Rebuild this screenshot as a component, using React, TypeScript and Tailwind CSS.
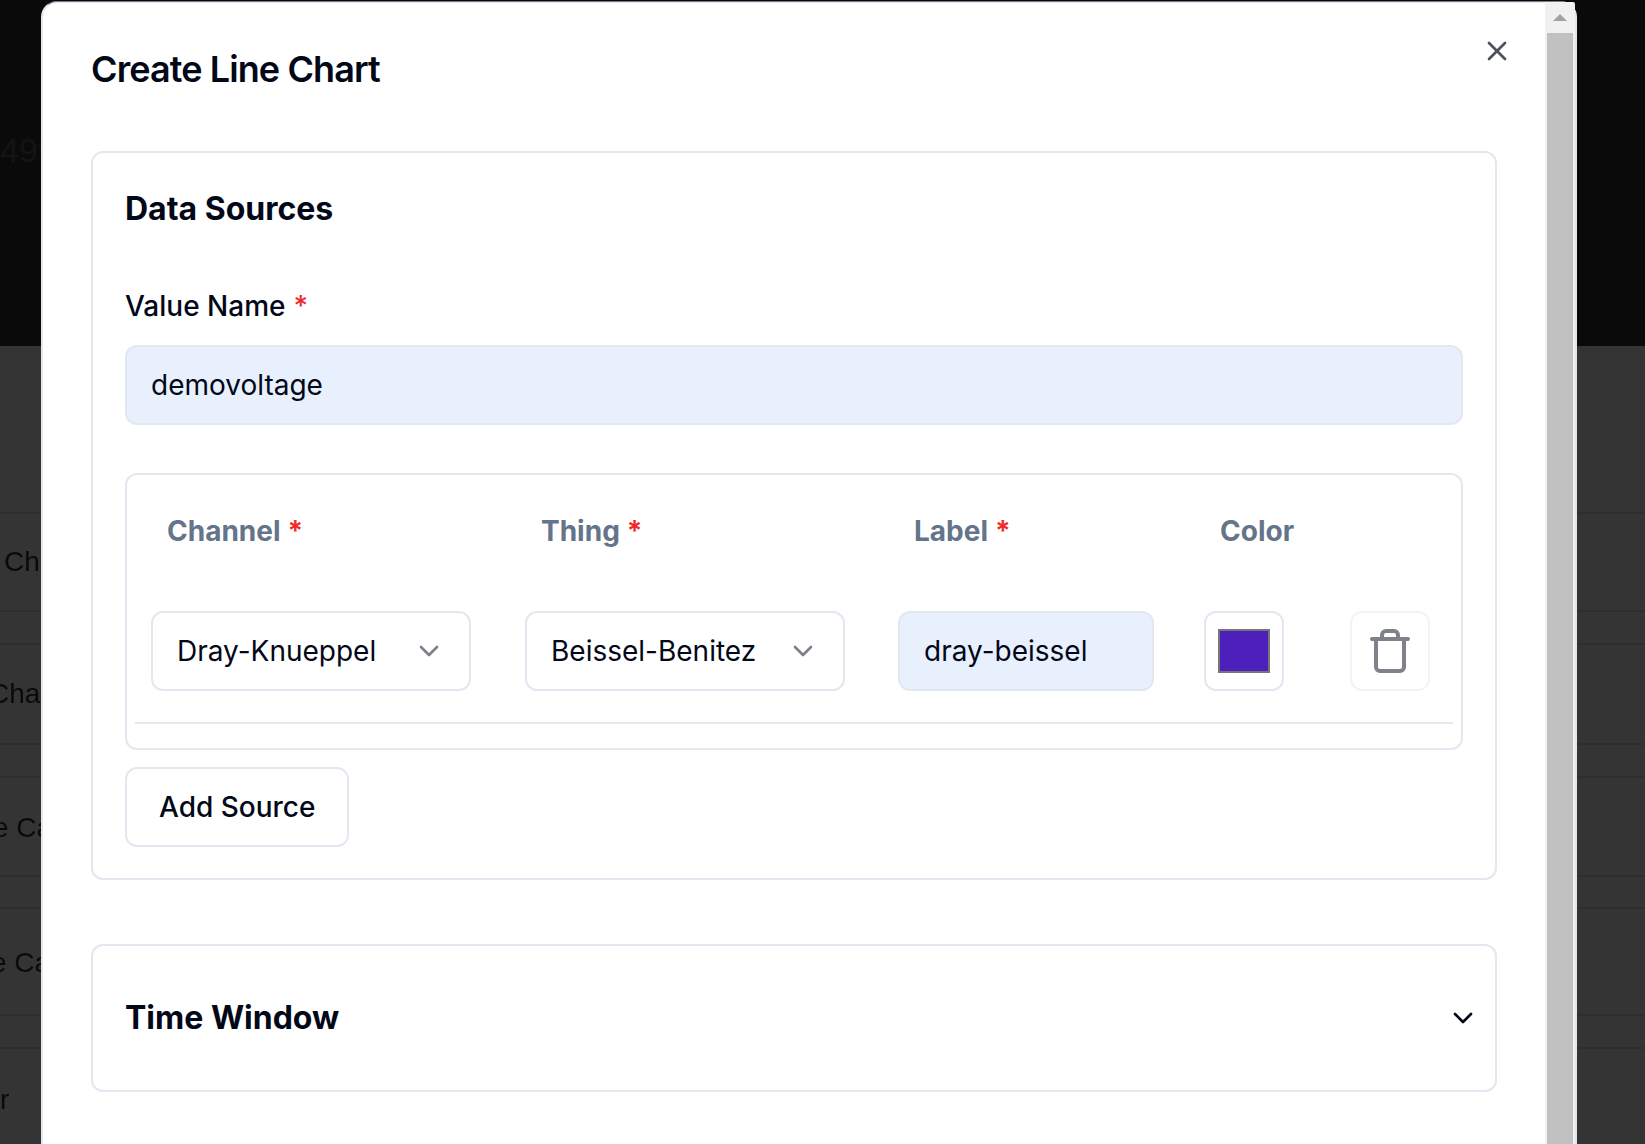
import { ChevronDown, Trash, X } from "lucide-react";

const font = { fontFamily: "Inter, sans-serif" };

const BackgroundRow = ({ text, h, indent }: { text: string; h: string; indent: string }) => (
  <div className={`${h} flex items-center border-t-2 border-[#2e2e2e] font-['Liberation_Sans',sans-serif] text-[28px] text-[#0a0a0a] blur-[0.5px]`}>
    <span className={`${indent} whitespace-nowrap`}>{text}</span>
  </div>
);

const Req = () => <span className="ml-2 text-[#ef2b2b]">*</span>;
const HeadReq = () => <span className="ml-[7px] text-[#ef2b2b]">*</span>;

const Select = ({ value }: { value: string }) => (
  <div className="flex h-20 items-center justify-between rounded-xl border-2 border-[#e2e8f0] px-6 text-[28px]">
    <span>{value}</span>
    <ChevronDown className="h-8 w-8 opacity-50" />
  </div>
);

export default function App() {
  return (
    <div className="relative h-[1144px] w-full overflow-hidden bg-[#343434]" style={font}>
      {/* page behind the overlay */}
      <div className="flex h-[346px] items-start bg-[#0a0a0a] pt-[125px] font-['Liberation_Sans',sans-serif] text-[34px] text-[#141414]">
        <span>499</span>
      </div>
      <div className="h-[166px]" />
      <BackgroundRow text="Ch" h="h-[98px]" indent="ml-1" />
      <div className="h-[33px] border-t-2 border-[#2e2e2e]" />
      <BackgroundRow text="Cha" h="h-[100px]" indent="-ml-[11px]" />
      <div className="h-[33px] border-t-2 border-[#2e2e2e]" />
      <BackgroundRow text="e Ca" h="h-[99px] pt-[3px]" indent="-ml-[7px]" />
      <div className="h-8 border-t-2 border-[#2e2e2e]" />
      <BackgroundRow text="e Ca" h="h-[107px] pt-[3px]" indent="-ml-[9px]" />
      <div className="h-[33px] border-t-2 border-[#2e2e2e]" />
      <BackgroundRow text="r" h="h-[100px] pt-[3px]" indent="ml-0" />

      {/* modal */}
      <div className="absolute left-[41px] top-px flex h-[1200px] w-[1536px] rounded-t-2xl border-2 border-[#e2e8f0] border-t-[#7b7f8a] border-t-1 bg-white text-[#020817] shadow-[inset_0_1px_0_#e2e8f0]">
        <div className="relative w-[1502px] shrink-0 px-12 pt-[49px]">
          <h2 className="text-[36px] font-semibold leading-9 tracking-tight">Create Line Chart</h2>
          <X className="absolute right-[32px] top-[33px] h-8 w-8 opacity-70" />

          <section className="mt-16 h-[729px] rounded-xl border-2 border-[#e2e8f0] px-8 pt-8">
            <h3 className="text-[32px] font-bold leading-[48px]">Data Sources</h3>
            <label className="mt-[59px] block text-[28px] font-medium leading-7">
              Value Name<Req />
            </label>
            <div className="mt-[25px] flex h-20 items-center rounded-xl border-2 border-[#e2e8f0] bg-[#e8f0fe] px-6 text-[28px]">
              demovoltage
            </div>

            <div className="mt-[48px] h-[277px] rounded-xl border-2 border-[#e2e8f0] px-2">
              <div className="grid h-[136px] grid-cols-[374px_373px_306px_146px_119px] content-start pt-[34px] text-[28px] font-bold leading-[44px] text-[#64748b]">
                <div className="pl-[32px]">Channel<HeadReq /></div>
                <div className="pl-[32px]">Thing<HeadReq /></div>
                <div className="pl-[32px]">Label<HeadReq /></div>
                <div className="pl-[32px]">Color</div>
                <div />
              </div>
              <div className="grid h-[113px] grid-cols-[374px_373px_306px_146px_119px] content-start border-b-2 border-[#e2e8f0]">
                <div className="pl-[16px] pr-[38px]"><Select value="Dray-Knueppel" /></div>
                <div className="pl-[16px] pr-[37px]"><Select value="Beissel-Benitez" /></div>
                <div className="pl-[16px] pr-[34px]">
                  <div className="flex h-20 items-center rounded-xl border-2 border-[#e2e8f0] bg-[#e8f0fe] px-6 text-[28px]">dray-beissel</div>
                </div>
                <div className="pl-[16px]">
                  <div className="flex h-20 w-20 items-center justify-center rounded-xl border-2 border-[#e2e8f0]">
                    <div className="h-[44px] w-[52px] border-2 border-[#767676] bg-[#4d20bc]" />
                  </div>
                </div>
                <div className="pl-[16px]">
                  <div className="flex h-20 w-20 items-center justify-center rounded-xl border-2 border-[#e2e8f0] opacity-50">
                    <Trash className="h-12 w-12" />
                  </div>
                </div>
              </div>
            </div>

            <div className="mt-[17px] inline-flex h-20 items-center rounded-xl border-2 border-[#e2e8f0] px-8 text-[28px] font-medium">
              Add Source
            </div>
          </section>

          <section className="mt-[64px] flex h-[148px] items-center justify-between rounded-xl border-2 border-[#e2e8f0] pl-8 pr-4">
            <h3 className="text-[32px] font-bold">Time Window</h3>
            <ChevronDown className="h-8 w-8" />
          </section>
        </div>

        {/* scrollbar */}
        <div className="flex w-[28px] shrink-0 flex-col bg-[#f1f1f1]">
          <div className="flex h-[31px] shrink-0 items-center justify-center pl-[2px]">
            <div className="h-0 w-0 border-x-[7px] border-b-[7px] border-x-transparent border-b-[#a3a3a3]" />
          </div>
          <div className="ml-[2px] flex-1 bg-[#c1c1c1]" />
        </div>
        <div className="w-[2px] shrink-0 rounded-tr-2xl bg-[#f1f1f1]" />
      </div>
    </div>
  );
}
